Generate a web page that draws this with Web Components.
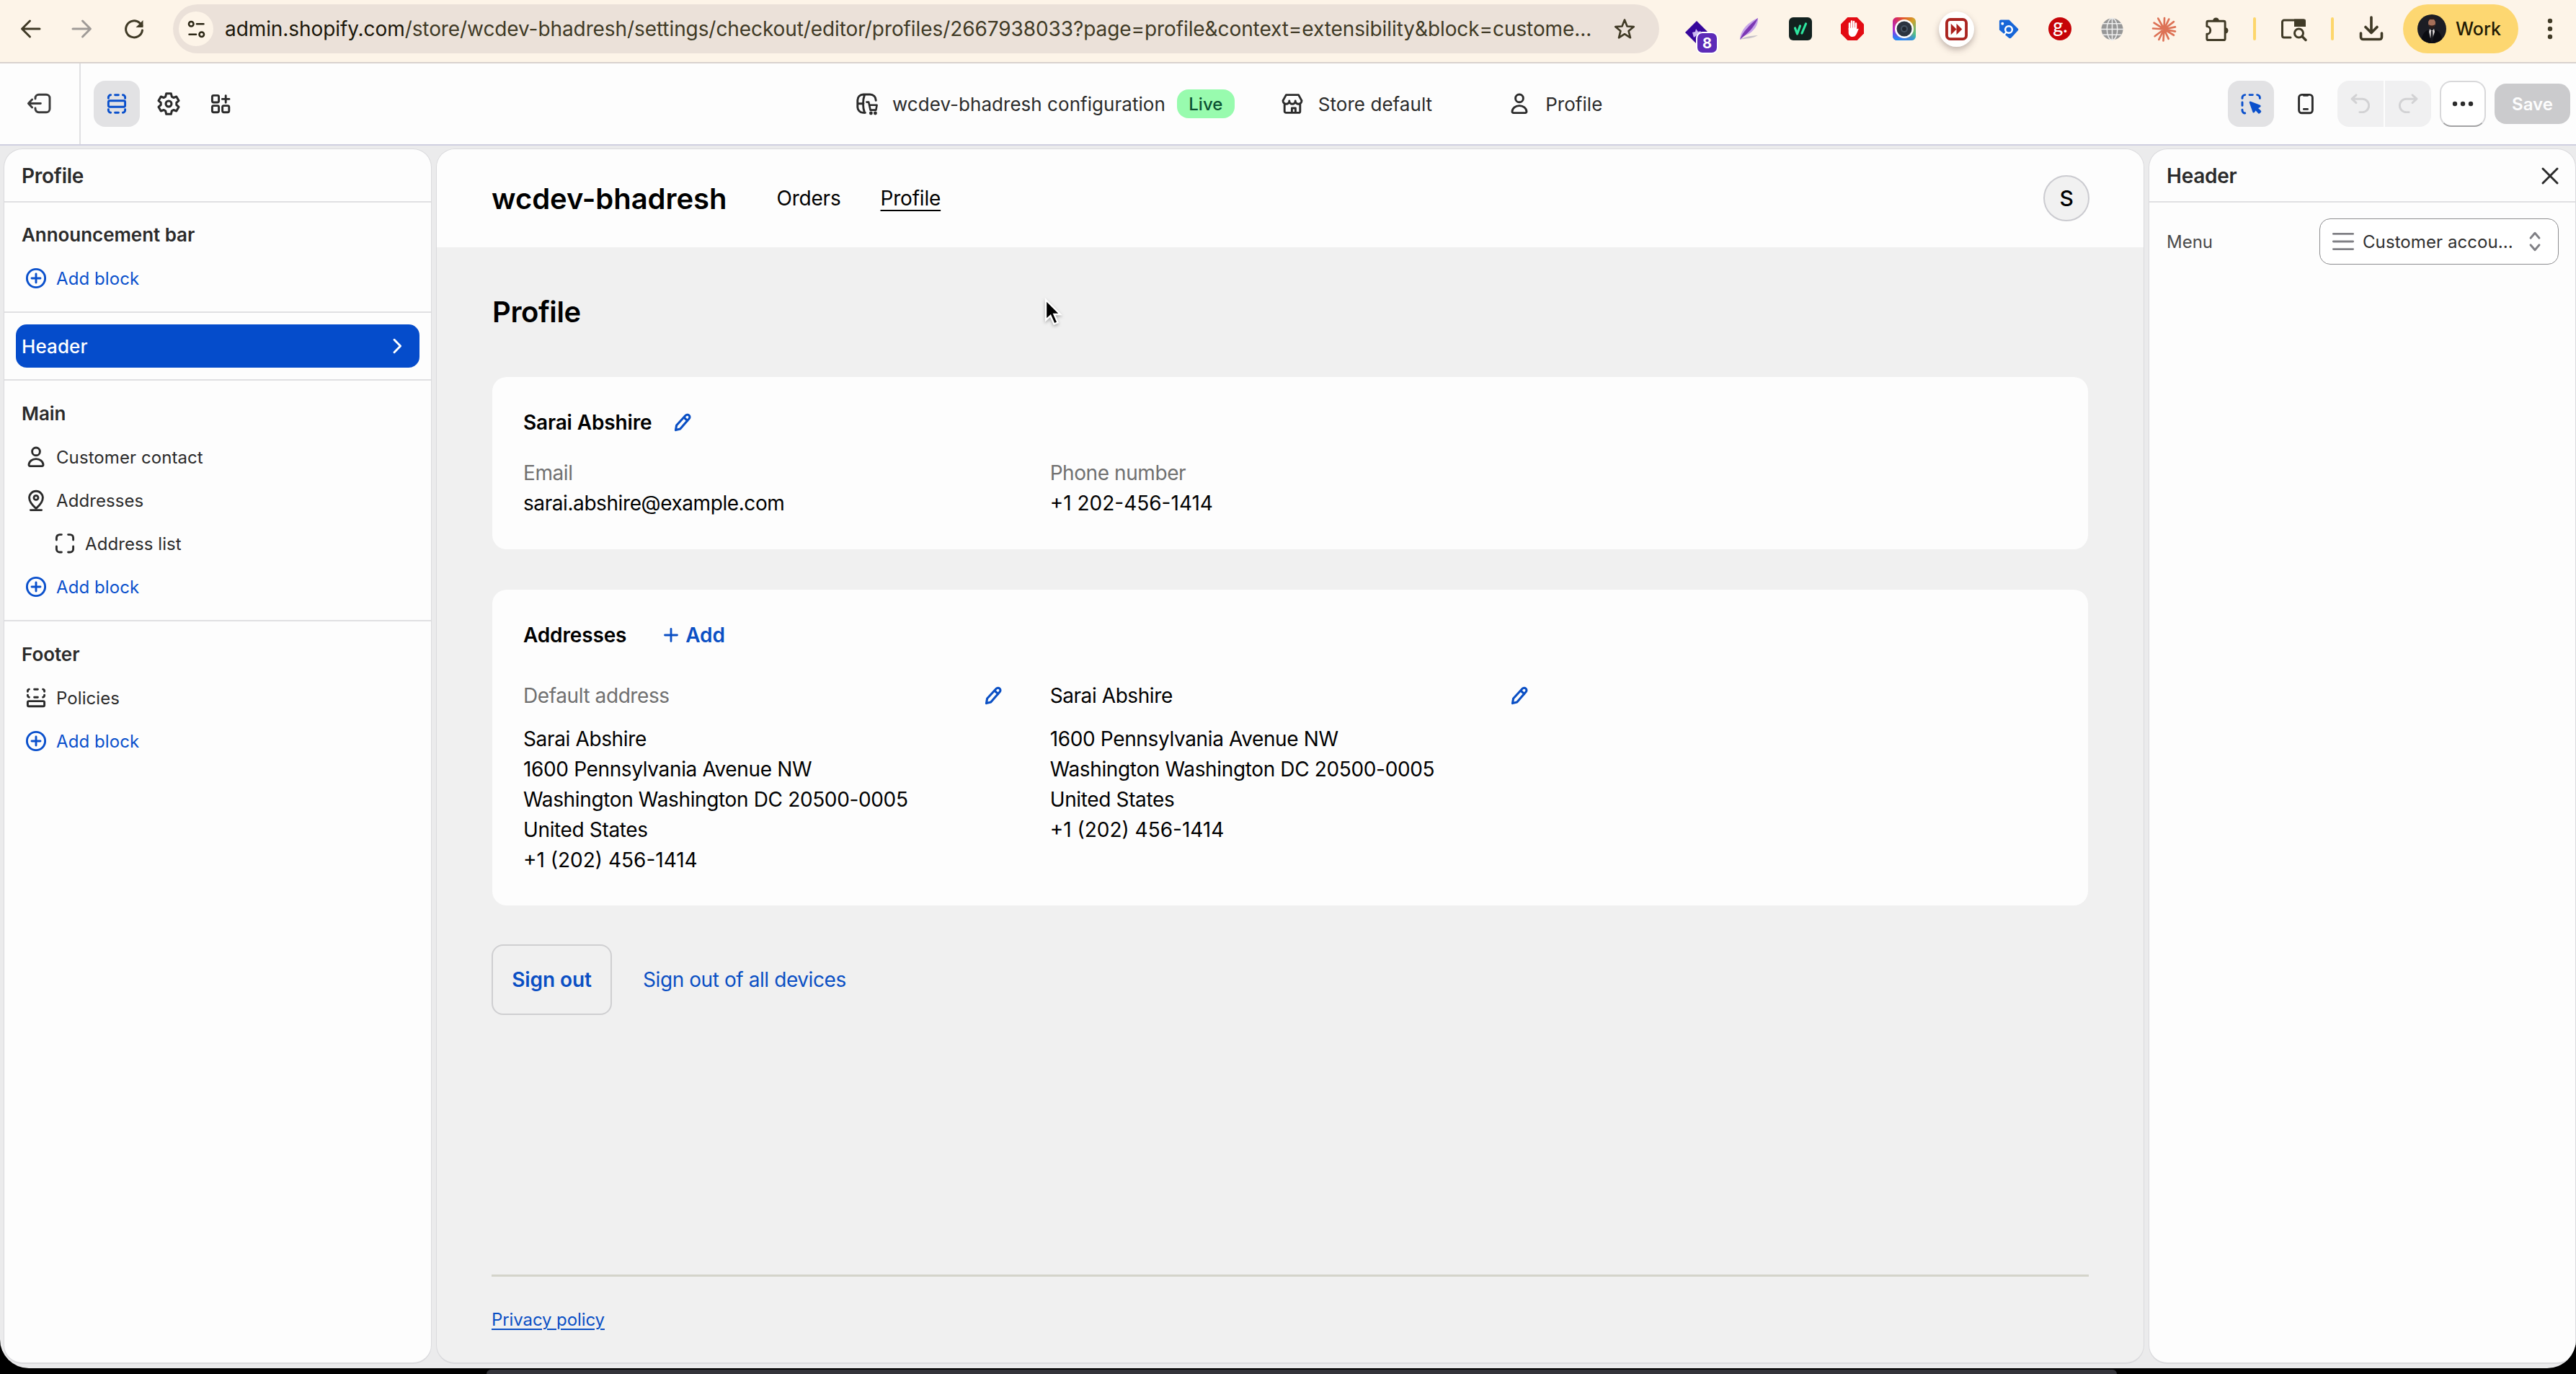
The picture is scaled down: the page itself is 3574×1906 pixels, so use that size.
<!DOCTYPE html>
<html lang="en">
<head>
<meta charset="utf-8">
<title>Profile - Checkout editor</title>
<style>
    html,
    body {
        margin: 0;
        height: 100%;
    }

    body {
        --editor-bg: #ebebec;
        --editor-surface: #fdfdfd;
        --editor-line: #e0e0e2;
        --editor-text: #2b2b2b;
        --editor-blue: #0a50cc;
        --preview-blue: #0a4fc4;
        width: 3574px;
        height: 1906px;
        overflow: hidden;
        background: #000;
        color: var(--editor-text);
        font-family: Inter, "Liberation Sans", sans-serif;
        font-size: 26px;
    }
</style>
</head>
<body>

<!-- Icon: <ce-icon name size> -->
<script>
    const ICONS = {
        /* browser chrome */
        'back': ['0 0 32 32', '<path d="M29 16H5M15.500 5 4.500 16l11 11" stroke="#403a26" stroke-width="3"/>'],
        'forward': ['0 0 32 32', '<path d="M3 16h24M16.500 5l11 11-11 11" stroke="#a09b97" stroke-width="3"/>'],
        'reload': ['0 0 32 32', '<path d="M27.500 18A11.500 11.500 0 1 1 24 8l3 3.500" stroke="#403a26" stroke-width="3"/><path d="M28.500 4v10h-10z" fill="#403a26"/>'],
        'site-info': ['0 0 32 32', '<g stroke="#2c2715" stroke-width="2.800"><circle cx="8" cy="8" r="3.600"/><path d="M16.500 8H27M5 24h10.500"/><circle cx="24" cy="24" r="3.600"/></g>'],
        'star': ['0 0 32 32', '<path d="m16 3.500 3.500 9 9.300.6-7.200 6 2.400 9.200-8-5.100-8 5.100 2.400-9.200-7.200-6 9.300-.6z" stroke="#403a26" stroke-width="2.600"/>'],
        'ext-diamond': ['0 0 60 60', '<path d="M25 14 41 30 25 46 9 30z" fill="#37079b"/><path d="m19 30 4-1 1-4 3 4 4-1-2 4 1 3-5-1-4 3z" fill="#cbb9f2"/><rect x="24" y="29" width="31" height="31" rx="9" fill="#fff"/><rect x="26" y="31" width="27" height="27" rx="7" fill="#5d2bb8"/><text x="39.500" y="52" font-size="20" font-weight="700" text-anchor="middle" fill="#fff">8</text>'],
        'ext-feather': ['0 0 32 32', '<path d="M4 31C5 16 17 6 29 1c1 9-5 19-17 24-3 1-5 3-8 6z" fill="#c7a6e8"/><path d="M4 31C8 20 17 11 29 1 24 14 16 21 4 31z" fill="#7c38b4"/><path d="M4 31c8-5 15-5 25-6-8 5-16 4-25 6z" fill="#c8c3c8"/>'],
        'ext-check': ['0 0 32 32', '<rect width="32" height="32" rx="6" fill="#12211f"/><path d="m8.500 15 3 8 4-11" stroke="#2ee6a0" stroke-width="3.200"/><path d="m18 22 5.500-13" stroke="#2ee6a0" stroke-width="3.200"/>'],
        'ext-stop': ['0 0 32 32', '<path d="M9.400 0h13.200L32 9.400v13.200L22.600 32H9.400L0 22.600V9.400z" fill="#e30b13"/><path d="M12 17V8.500M15 16V5.500M18 16V6M21 17V8.500" stroke="#fff" stroke-width="2.500"/><path d="M10.700 15v6c0 4 2.500 6 5.500 6 4 0 5.500-3 8.500-11-1.500-.8-2.500 0-3.700 2.500V14z" fill="#fff"/>'],
        'ext-lens': ['0 0 32 32', '<defs><linearGradient id="a" x1="0" y1="0" x2="1" y2="1"><stop offset="0" stop-color="#f0142a"/><stop offset=".5" stop-color="#d4a028"/><stop offset="1" stop-color="#10cfb4"/></linearGradient><linearGradient id="b" x1=".9" y1="0" x2="0" y2=".7"><stop offset=".35" stop-color="#a020e0" stop-opacity="0"/><stop offset="1" stop-color="#b010f0"/></linearGradient><linearGradient id="c" x1=".4" y1=".6" x2=".3" y2="1"><stop offset="0" stop-color="#189cf0" stop-opacity="0"/><stop offset="1" stop-color="#1890f5"/></linearGradient></defs><rect width="32" height="32" rx="6" fill="url(#a)"/><rect width="32" height="32" rx="6" fill="url(#b)"/><rect width="32" height="32" rx="6" fill="url(#c)"/><circle cx="16" cy="16" r="13" fill="#fff"/><circle cx="16" cy="16" r="10.500" fill="#2c3440"/><circle cx="16" cy="16" r="5" fill="#465362"/><circle cx="16" cy="16" r="3" fill="#20262e"/>'],
        'ext-skip': ['0 0 32 32', '<rect x="2" y="2" width="28" height="28" rx="5" fill="#fff" stroke="#aa2420" stroke-width="4"/><path d="M8 8l8 8-8 8zM16 8l8 8-8 8z" fill="#ad211d"/>'],
        'ext-tag': ['0 0 32 32', '<path d="M3 4.500a2 2 0 0 1 2-2h12L29.500 15c1 1 1 2 0 3L20 28.500c-1 1-2.500 1-3.500 0L3 17z" fill="#1766d8"/><circle cx="7.500" cy="8" r="2" fill="#fff"/><circle cx="16.500" cy="16.500" r="5" stroke="#fff" stroke-width="2.600"/><path d="M13 20 10 24" stroke="#fff" stroke-width="2.400"/>'],
        'ext-g': ['0 0 32 32', '<circle cx="16" cy="16" r="16" fill="#c60408"/><text x="16.500" y="21" font-size="27" font-weight="500" text-anchor="middle" fill="#fff" font-family="Lato, sans-serif">g.</text>'],
        'ext-globe': ['0 0 32 32', '<circle cx="16" cy="16" r="15.500" fill="#979797"/><g stroke="#efefef" stroke-width="1.500"><ellipse cx="16" cy="16" rx="7.500" ry="15.500"/><path d="M16 0v32M0 16h32M3 8h26M3 24h26"/></g>'],
        'ext-burst': ['0 0 32 32', '<path d="M16 16 16.500 1M16 16l6.500-13.500M16 16 29 6M16 16l15-3M16 16l15 3M16 16l13 8M16 16l6 13M16 16l-1 15.500M16 16 9 30M16 16 3.500 25.500M16 16l-15-1M16 16 2.500 7.500M16 16 8 1.500" stroke="#dd7256" stroke-width="2.600"/>'],
        'puzzle': ['0 0 36 36', '<path d="M5 14V8.500a2 2 0 0 1 2-2h22a2 2 0 0 1 2 2v23a2 2 0 0 1-2 2H7a2 2 0 0 1-2-2V25c3 0 5-2.500 5-5.500S8 14 5 14z" stroke="#403a26" stroke-width="3"/><path d="M13.500 6c0-6 9-6 9 0zM31 15.500c6 0 6 9 0 9z" fill="#403a26"/>'],
        'tab-search': ['0 0 36 36', '<path d="M14 30H5a2.500 2.500 0 0 1-2.500-2.500v-19A2.500 2.500 0 0 1 5 6h27" stroke="#403a26" stroke-width="3"/><path d="M19 4.500h14a2 2 0 0 1 2 2V15H19z" fill="#403a26"/><circle cx="25.500" cy="24" r="6" stroke="#403a26" stroke-width="3"/><path d="m30 28.500 5 5" stroke="#403a26" stroke-width="3.500"/>'],
        'download': ['0 0 36 36', '<path d="M18 2v21M10 15.500l8 8 8-8M3.500 24v5.500a3 3 0 0 0 3 3h23a3 3 0 0 0 3-3V24" stroke="#403a26" stroke-width="3.600"/>'],
        'kebab': ['0 0 36 36', '<g fill="#403a26"><circle cx="18" cy="7" r="3.200"/><circle cx="18" cy="18" r="3.200"/><circle cx="18" cy="29" r="3.200"/></g>'],
        'avatar': ['0 0 40 40', '<defs><clipPath id="r"><circle cx="20" cy="20" r="20"/></clipPath></defs><g clip-path="url(#r)"><path d="M0 0h40v40H0z" fill="#1c1d24"/><path d="M5 40c1-14 6-19 15-19s14 5 15 19z" fill="#0b0c12"/><path d="m17 20 3 3 3-3 1 4-3 9h-3l-2-9z" fill="#d9d5d5"/><path d="m19 23-1 12 2 4 2-4-1-12z" fill="#15161d"/><ellipse cx="20" cy="12" rx="5" ry="6.500" fill="#a56f59"/><path d="M15 9c0-7 10-7 10 0l-2-2h-6zM15.500 14c1 7 8 7 9 0-3 2-6 2-9 0z" fill="#2b1e1c"/></g>'],

        /* editor */
        'exit': ['0 0 20 20', '<path d="M7 6.500V6a2.400 2.400 0 0 1 2.400-2.400h5.200A2.400 2.400 0 0 1 17 6v7.500a2.400 2.400 0 0 1-2.400 2.400H9.400A2.400 2.400 0 0 1 7 13.500V13M10.700 9.750H2.300M4.800 7 2.200 9.750l2.600 2.750"/>'],
        'sections': ['0 0 20 20', '<path d="M4.200 6.200V5.500A1.600 1.600 0 0 1 5.800 3.900M8.800 3.900h2.400M14.200 3.900a1.600 1.600 0 0 1 1.600 1.600v.7M4.200 13.800v.7a1.600 1.600 0 0 0 1.600 1.600M8.800 16.100h2.400M14.200 16.100a1.600 1.600 0 0 0 1.600-1.600v-.7"/><rect x="4.200" y="7.900" width="11.600" height="4.200" rx="1"/>'],
        'gear': ['0 0 20 20', '<path d="M8.430 3.180h3.140l.5 2.100 1.130.65 1.920-.7 1.570 2.720-1.540 1.330v1.440l1.540 1.330-1.570 2.720-1.920-.7-1.130.65-.5 2.100H8.430l-.5-2.100-1.130-.65-1.920.7-1.570-2.720 1.540-1.330V9.280L3.310 7.950l1.570-2.720 1.920.7 1.130-.65z"/><circle cx="10" cy="10" r="1.900"/>'],
        'apps': ['0 0 20 20', '<rect x="4.200" y="4.200" width="4.600" height="4.800" rx="1"/><rect x="4.200" y="11.300" width="4.600" height="4.600" rx="1"/><rect x="11.300" y="11.300" width="4.600" height="4.600" rx="1"/><path d="M13.600 4.300v4.800M11.200 6.700H16"/>'],
        'market': ['0 0 20 20', '<path d="M8.700 16.200H7.200A4 4 0 0 1 3.400 12.300V7.500a4 4 0 0 1 4-4h4.700a4 4 0 0 1 4 4v.2M8.300 3.700c-1.400 3.600-1.400 8.900 0 12.500M3.500 9.900h4"/><path d="M9.700 8.800h1.400l1.200 5.500h3.900l.6-3.400h-5" stroke-width="1.300"/><circle cx="12.700" cy="16.500" r=".5" fill="currentColor"/><circle cx="15.700" cy="16.500" r=".5" fill="currentColor"/>'],
        'store': ['0 0 20 20', '<path d="M4.600 10v5.200a1 1 0 0 0 1 1h8.800a1 1 0 0 0 1-1V10M5.700 3.800h8.600l2.200 4c0 1.500-1 2.300-2.200 2.300S12.100 9.300 12.100 8c0 1.300-1 2.100-2.100 2.100S7.900 9.300 7.900 8c0 1.300-1 2.100-2.200 2.100S3.500 9.300 3.500 7.800zM9.700 16v-3h2.500v3"/>'],
        'person': ['0 0 20 20', '<circle cx="10" cy="6.200" r="2.700"/><path d="M5 15.300c.2-2.400 2.300-4 5-4s4.800 1.600 5 4c0 .6-.4 1-1 1H6c-.6 0-1-.4-1-1z"/>'],
        'pin': ['0 0 20 20', '<path d="M10 15.700C7.200 13.300 5.300 10.900 5.300 8.300a4.700 4.700 0 0 1 9.400 0c0 2.600-1.900 5-4.700 7.400z"/><circle cx="10" cy="8.200" r="1.500"/><path d="M6.200 16.800h7.600"/>'],
        'frame': ['0 0 20 20', '<path d="M4.200 7.500V6a2.200 2.200 0 0 1 2.200-2.200h1.300M12.300 3.800h1.300A2.200 2.200 0 0 1 15.800 6v1.500M15.800 12v1.800a2.200 2.200 0 0 1-2.200 2.200h-1.300M7.700 16H6.400a2.200 2.200 0 0 1-2.200-2.200V12"/>'],
        'footer': ['0 0 20 20', '<path d="M4.200 5.600v-.3a1.300 1.300 0 0 1 1-1.200M8.800 4.100h2.400M14.800 4.100a1.300 1.300 0 0 1 1 1.200v.3M4.200 8.100v.3a1.300 1.300 0 0 0 1 1.200M8.800 9.600h2.400M14.800 9.600a1.300 1.300 0 0 0 1-1.200v-.3"/><rect x="4.200" y="12.300" width="11.600" height="3.600" rx=".8"/>'],
        'add': ['0 0 20 20', '<circle cx="10" cy="10" r="6.300"/><path d="M10 7v6M7 10h6"/>'],
        'chevron': ['0 0 20 20', '<path d="m8 5.600 4.300 4.400L8 14.400"/>'],
        'select': ['0 0 20 20', '<path d="M4 6.200v-.5A1.900 1.900 0 0 1 5.900 3.800M9 3.800h2.200M14.300 3.800a1.900 1.900 0 0 1 1.900 1.900v.5M4 9v2.200M4 14.100v.5a1.900 1.900 0 0 0 1.900 1.900"/><path d="m9.600 9 2.300 6.500 1.300-2 2.400 2.600.8-.8-2.500-2.400 2.200-1.300z" fill="currentColor"/>'],
        'phone': ['0 0 20 20', '<rect x="5.300" y="3.700" width="9.400" height="12.700" rx="2"/><path d="M8.700 4.200h2.600M8.700 13.700h2.600"/>'],
        'undo': ['0 0 20 20', '<path d="M7 3.900 4 6.600 7 9.300M4.300 6.600h6.900a4.600 4.600 0 0 1 0 9.200H9.400"/>'],
        'redo': ['0 0 20 20', '<path d="m13 3.900 3 2.700-3 2.700M15.700 6.600H8.800a4.600 4.600 0 0 0 0 9.200h1.800"/>'],
        'more': ['0 0 20 20', '<g fill="currentColor" stroke="none"><circle cx="4.500" cy="10" r="1.600"/><circle cx="10" cy="10" r="1.600"/><circle cx="15.500" cy="10" r="1.600"/></g>'],
        'close': ['0 0 20 20', '<path d="m5 5 10 10M15 5 5 15"/>'],
        'menu': ['0 0 20 20', '<path d="M3.200 4.700h13.600M3.200 10h13.600M3.200 15.300h13.600"/>'],
        'updown': ['0 0 20 20', '<path d="m7 7.600 3-3.500 3 3.500M7 12.400l3 3.500 3-3.500"/>'],
        'pencil': ['0 0 28 28', '<path d="M18.200 4.300a3.300 3.300 0 0 1 4.900 4.500L10.700 23l-6.200 1.600L5.600 18zM15.900 7l4.900 4.600" stroke-width="3.100"/>'],
        'plus': ['0 0 28 28', '<path d="M14 5.500v17M5.500 14h17" stroke-width="2.800"/>'],
        'cursor': ['0 0 32 44', '<path d="M4 3v28l6.500-6 5 11.500 5-2.200-5-11.300h8.500z" fill="#000" stroke="#fff" stroke-width="2.400" stroke-linejoin="miter"/>']
    };

    class CeIcon extends HTMLElement {
        connectedCallback() {
            const [box, shapes] = ICONS[this.getAttribute('name')];
            const size = this.getAttribute('size') || 40;
            const root = this.attachShadow({mode: 'open'});
            root.innerHTML = `
                <style>
                    :host { display: block; flex: none; width: ${size}px; height: ${size}px; }
                    svg { display: block; width: 100%; height: 100%; overflow: visible; }
                </style>
                <svg viewBox="${box}" fill="none" stroke-width="1.45" stroke-linecap="round" stroke-linejoin="round">${shapes}</svg>`;
            // stroked editor icons take the text colour, filled ones opt out
            if (!/fill="#|stroke="#|url\(/.test(shapes)) {
                root.querySelector('svg').setAttribute('stroke', 'currentColor');
            }
        }
    }
    window.customElements.define('ce-icon', CeIcon);
</script>

<!-- Browser bar -->
<template id="browser-bar-template">
    <style>
        :host {
            display: flex;
            align-items: center;
            box-sizing: border-box;
            height: 88px;
            padding: 0 0 6px 26px;
            background: #fdf4e8;
            border-bottom: 2px solid #d9d2cf;
        }

        .nav {
            display: flex;
            gap: 40px;
        }

        .url {
            display: flex;
            align-items: center;
            box-sizing: border-box;
            width: 2062px;
            height: 68px;
            margin-left: 38px;
            padding: 0 32px 0 8px;
            border-radius: 34px;
            background: #ebe1d9;
            color: #403a26;
            font-size: 28px;
            letter-spacing: -0.085px;
            white-space: nowrap;
        }

        .url b {
            font-weight: 400;
            color: #1b170a;
        }

        .url > ce-icon {
            margin-left: auto;
        }

        .info {
            display: grid;
            place-items: center;
            width: 48px;
            height: 48px;
            margin-right: 16px;
            border-radius: 50%;
            background: #fdf4e8;
        }

        .extensions {
            display: grid;
            grid-template-columns: repeat(11, 72px);
            place-items: center;
            margin-left: 16px;
        }

        .ringed {
            display: grid;
            place-items: center;
            width: 49px;
            height: 49px;
            border-radius: 50%;
            background: #fff;
            box-shadow: 0 4px 8px rgba(80, 60, 60, 0.35);
        }

        .sep {
            width: 4px;
            height: 32px;
            border-radius: 2px;
            background: #fdd66b;
        }

        .profile {
            display: flex;
            align-items: center;
            gap: 13px;
            box-sizing: border-box;
            width: 160px;
            height: 68px;
            margin: 0 26px;
            padding-left: 20px;
            border-radius: 34px;
            background: #fdd771;
            color: #221b05;
            font-size: 25px;
            font-weight: 500;
        }
    </style>
    <div class="nav">
        <ce-icon name="back" size="32"></ce-icon>
        <ce-icon name="forward" size="32"></ce-icon>
        <ce-icon name="reload" size="32"></ce-icon>
    </div>
    <div class="url">
        <div class="info"><ce-icon name="site-info" size="29"></ce-icon></div>
        <span><b>admin.shopify.com</b>/store/wcdev-bhadresh/settings/checkout/editor/profiles/2667938033?page=profile&amp;context=extensibility&amp;block=custome...</span>
        <ce-icon name="star" size="32"></ce-icon>
    </div>
    <div class="extensions">
        <ce-icon name="ext-diamond" size="60" style="margin: 10px 0 0 10px"></ce-icon>
        <ce-icon name="ext-feather" size="32"></ce-icon>
        <ce-icon name="ext-check" size="32"></ce-icon>
        <ce-icon name="ext-stop" size="32"></ce-icon>
        <ce-icon name="ext-lens" size="32"></ce-icon>
        <div class="ringed"><ce-icon name="ext-skip" size="31"></ce-icon></div>
        <ce-icon name="ext-tag" size="31"></ce-icon>
        <ce-icon name="ext-g" size="32"></ce-icon>
        <ce-icon name="ext-globe" size="31"></ce-icon>
        <ce-icon name="ext-burst" size="33"></ce-icon>
        <ce-icon name="puzzle" size="35"></ce-icon>
    </div>
    <div class="sep" style="margin: 0 34px 0 16px"></div>
    <ce-icon name="tab-search" size="36"></ce-icon>
    <div class="sep" style="margin: 0 34px"></div>
    <ce-icon name="download" size="36"></ce-icon>
    <div class="profile"><ce-icon name="avatar" size="40"></ce-icon>Work</div>
    <ce-icon name="kebab" size="36"></ce-icon>
</template>

<!-- Editor toolbar -->
<template id="editor-toolbar-template">
    <style>
        :host {
            display: flex;
            align-items: center;
            box-sizing: border-box;
            height: 114px;
            padding-right: 8px;
            background: var(--editor-surface);
            border-bottom: 2px solid #cfcfe0;
        }

        .exit {
            display: grid;
            place-items: center;
            box-sizing: border-box;
            align-self: stretch;
            width: 112px;
            border-right: 2px solid var(--editor-line);
            color: #3a3a3a;
        }

        .tools {
            display: flex;
            gap: 8px;
            margin-left: 18px;
        }

        .btn {
            display: grid;
            place-items: center;
            box-sizing: border-box;
            width: 64px;
            height: 64px;
            border-radius: 16px;
        }

        .active {
            background: #e2e2e4;
            color: var(--editor-blue);
        }

        .context {
            display: flex;
            align-items: center;
            margin-left: 845px;
            letter-spacing: 0.04px;
        }

        .label {
            margin-left: 15px;
        }

        .badge {
            display: grid;
            place-items: center;
            width: 80px;
            height: 40px;
            margin: 0 60px 0 16px;
            border-radius: 16px;
            background: #98fbae;
            color: #0c5132;
            font-size: 24px;
            font-weight: 500;
        }

        .actions {
            display: flex;
            align-items: center;
            gap: 12px;
            margin-left: auto;
        }

        .history {
            display: flex;
            gap: 2px;
            color: #d2d2d4;
        }

        .history .btn {
            background: #f0f0f1;
        }

        .history .btn:first-child {
            border-radius: 16px 0 0 16px;
        }

        .history .btn:last-child {
            border-radius: 0 16px 16px 0;
        }

        .outlined {
            border: 2px solid #d8d8da;
            border-bottom-color: #a2a2a4;
            background: #fff;
        }

        .save {
            display: grid;
            place-items: center;
            width: 105px;
            height: 56px;
            border-radius: 16px;
            background: #cbcbcd;
            color: #fdfdfd;
            font-size: 24px;
            font-weight: 600;
        }
    </style>
    <div class="exit"><ce-icon name="exit"></ce-icon></div>
    <div class="tools">
        <div class="btn active"><ce-icon name="sections"></ce-icon></div>
        <div class="btn"><ce-icon name="gear" size="42"></ce-icon></div>
        <div class="btn"><ce-icon name="apps"></ce-icon></div>
    </div>
    <div class="context">
        <ce-icon name="market"></ce-icon>
        <span class="label">wcdev-bhadresh configuration</span>
        <span class="badge">Live</span>
        <ce-icon name="store"></ce-icon>
        <span class="label" style="margin-left: 16px">Store default</span>
        <ce-icon name="person" style="margin-left: 101px"></ce-icon>
        <span class="label" style="margin-left: 16px">Profile</span>
    </div>
    <div class="actions">
        <div class="btn active"><ce-icon name="select"></ce-icon></div>
        <div class="btn"><ce-icon name="phone"></ce-icon></div>
        <div class="history">
            <div class="btn"><ce-icon name="undo"></ce-icon></div>
            <div class="btn"><ce-icon name="redo"></ce-icon></div>
        </div>
        <div class="btn outlined"><ce-icon name="more"></ce-icon></div>
        <div class="save">Save</div>
    </div>
</template>

<!-- Side panel: titled card with slotted content -->
<template id="side-panel-template">
    <style>
        :host {
            display: block;
            box-sizing: border-box;
            overflow: hidden;
            border: 2px solid #dadadd;
            border-width: 1px 1px 2px;
            border-radius: 26px;
            background: var(--editor-surface);
        }

        header {
            display: flex;
            align-items: center;
            justify-content: space-between;
            box-sizing: border-box;
            height: 72px;
            padding: 2px 15px 0 24px;
            font-size: 28px;
            font-weight: 600;
            letter-spacing: -0.25px;
        }
    </style>
    <header><span id="title"></span><slot name="action"></slot></header>
    <slot></slot>
</template>

<!-- Group of blocks in the left panel -->
<template id="block-group-template">
    <style>
        :host {
            display: block;
            padding: 16px 0;
            border-top: 2px solid var(--editor-line);
        }

        h2 {
            margin: 0;
            padding-left: 24px;
            font-size: 26px;
            font-weight: 600;
            line-height: 60px;
            letter-spacing: -0.05px;
        }
    </style>
    <h2></h2>
    <slot></slot>
</template>

<!-- Block row -->
<template id="block-row-template">
    <style>
        :host {
            display: flex;
            align-items: center;
            gap: 8px;
            height: 60px;
            padding-left: 24px;
            font-size: 24px;
            letter-spacing: 0.08px;
        }

        :host([nested]) {
            padding-left: 64px;
        }

        :host([add]) {
            color: var(--editor-blue);
        }

        :host([selected]) {
            justify-content: space-between;
            margin: 0 16px;
            padding: 0 11px 0 8px;
            border-radius: 15px;
            background: #054ccb;
            color: #fff;
            font-size: 26px;
            font-weight: 500;
        }
    </style>
    <slot></slot>
</template>

<!-- Customer account preview -->
<template id="account-preview-template">
    <style>
        :host {
            display: flex;
            flex-direction: column;
            box-sizing: border-box;
            overflow: hidden;
            border: 2px solid #dadadd;
            border-width: 1px 1px 2px;
            border-radius: 26px;
            background: #f0f0f0;
            color: #000;
            font-size: 28px;
            letter-spacing: -0.42px;
        }

        header {
            display: flex;
            align-items: center;
            height: 136px;
            padding: 0 75px 0 76px;
            background: var(--editor-surface);
        }

        .shop {
            margin-right: 69px;
            font-size: 40px;
            font-weight: 600;
            letter-spacing: -0.05px;
        }

        nav {
            display: flex;
            gap: 55px;
            letter-spacing: -0.2px;
        }

        .current {
            text-decoration: underline;
            text-decoration-thickness: 2px;
            text-underline-offset: 6px;
        }

        .initial {
            display: grid;
            place-items: center;
            box-sizing: border-box;
            width: 64px;
            height: 64px;
            margin-left: auto;
            border: 2px solid #cbcbd0;
            border-radius: 50%;
            background: #f1f1f1;
            font-size: 30px;
            font-weight: 500;
        }

        main {
            display: flex;
            flex-direction: column;
            gap: 56px;
            flex: 1;
            padding: 66px 77px 0;
        }

        h1 {
            margin: 0 0 10px;
            font-size: 40px;
            font-weight: 600;
            line-height: 48px;
            letter-spacing: -0.4px;
        }

        .signout {
            display: flex;
            align-items: center;
            gap: 43px;
            margin: -2px 0 0 -1px;
            color: var(--preview-blue);
        }

        .signout b {
            box-sizing: border-box;
            width: 167px;
            border: 2px solid #cfcfd1;
            border-radius: 16px;
            font-weight: 600;
            line-height: 94px;
            text-align: center;
            letter-spacing: -0.1px;
        }

        footer {
            height: 119px;
            margin: 0 76px 0 76px;
            border-top: 3px solid #d4d4ca;
            color: var(--preview-blue);
            font-size: 24px;
            line-height: 120px;
            letter-spacing: -0.1px;
            text-decoration: underline;
            text-decoration-thickness: 2px;
            text-underline-offset: 4px;
        }

        /* pointer floats over the page */
        .pointer {
            position: absolute;
            left: 1441px;
            top: 413px;
            filter: drop-shadow(0 2px 2px rgba(0, 0, 0, 0.3));
        }
    </style>
    <header>
        <span class="shop">wcdev-bhadresh</span>
        <nav><span>Orders</span><span class="current">Profile</span></nav>
        <span class="initial">S</span>
    </header>
    <main>
        <h1>Profile</h1>
        <slot></slot>
        <div class="signout"><b>Sign out</b><span>Sign out of all devices</span></div>
    </main>
    <footer>Privacy policy</footer>
    <ce-icon class="pointer" name="cursor" size="44"></ce-icon>
</template>

<!-- White card with a heading and three columns -->
<template id="info-card-template">
    <style>
        :host {
            display: block;
            box-sizing: border-box;
            padding: 42px 44px 42px 43px;
            border-radius: 20px;
            background: var(--editor-surface);
        }

        .heading {
            display: flex;
            align-items: center;
            height: 42px;
            font-weight: 600;
            letter-spacing: -0.15px;
        }

        .action {
            display: flex;
            align-items: center;
            color: var(--preview-blue);
        }

        .columns {
            display: grid;
            grid-template-columns: repeat(3, 1fr);
            gap: 65px;
        }
    </style>
    <div class="heading"><span id="title"></span><div class="action"><slot name="action"></slot></div></div>
    <div class="columns"><slot></slot></div>
</template>

<!-- Address / contact entry -->
<template id="info-entry-template">
    <style>
        :host {
            display: block;
            line-height: 42px;
        }

        .label {
            display: flex;
            align-items: center;
            justify-content: space-between;
            color: #707070;
        }

        :host([editable]) .label {
            margin-bottom: 18px;
        }

        :host([named]) .label {
            color: #000;
        }

        ce-icon {
            color: var(--preview-blue);
        }

        .value {
            white-space: pre-line;
        }

        :host([editable]) .value {
            letter-spacing: -0.36px;
        }

        ::slotted(.phone) {
            letter-spacing: 0;
        }
    </style>
    <div class="label"><span id="label"></span></div>
    <div class="value"><slot></slot></div>
</template>

<!-- Menu setting in the right panel -->
<template id="menu-setting-template">
    <style>
        :host {
            display: flex;
            align-items: center;
            justify-content: space-between;
            height: 64px;
            padding: 22px 23px 0 24px;
            border-top: 2px solid var(--editor-line);
            color: #4a4a4a;
            font-size: 24px;
        }

        .select {
            display: flex;
            align-items: center;
            box-sizing: border-box;
            width: 332px;
            height: 64px;
            padding: 0 12px 0 12px;
            border: 1.5px solid #8d8d8f;
            border-radius: 15px;
            background: #fff;
            color: #2f2f2f;
            letter-spacing: 0.08px;
        }

        .select ce-icon {
            color: #808085;
        }

        .select ce-icon:last-child {
            margin-left: auto;
        }

        .select span {
            margin-left: 7px;
        }
    </style>
    <slot></slot>
    <div class="select"><ce-icon name="menu"></ce-icon><span>Customer accou...</span><ce-icon name="updown"></ce-icon></div>
</template>

<style>
    .app {
        display: flex;
        flex-direction: column;
        height: 1898px;
        overflow: hidden;
        border-radius: 0 0 40px 40px;
        background: var(--editor-bg);
    }

    .workspace {
        display: grid;
        grid-template-columns: 594px 1fr 593px;
        gap: 6px;
        flex: 1;
        padding: 4px 0 6px 5px;
    }

    .desktop-edge {
        width: 2262px;
        height: 6px;
        margin: 2px auto 0 675px;
        border-radius: 24px 24px 0 0;
        background: #34343a;
    }
</style>

<div class="app">
    <browser-bar></browser-bar>
    <editor-toolbar></editor-toolbar>
    <div class="workspace">
        <side-panel label="Profile">
            <block-group label="Announcement bar" style="padding-top: 15px">
                <block-row add><ce-icon name="add"></ce-icon>Add block</block-row>
            </block-group>
            <block-group>
                <block-row selected>Header<ce-icon name="chevron"></ce-icon></block-row>
            </block-group>
            <block-group label="Main">
                <block-row><ce-icon name="person"></ce-icon>Customer contact</block-row>
                <block-row><ce-icon name="pin"></ce-icon>Addresses</block-row>
                <block-row nested><ce-icon name="frame"></ce-icon>Address list</block-row>
                <block-row add><ce-icon name="add"></ce-icon>Add block</block-row>
            </block-group>
            <block-group label="Footer">
                <block-row><ce-icon name="footer"></ce-icon>Policies</block-row>
                <block-row add><ce-icon name="add"></ce-icon>Add block</block-row>
            </block-group>
        </side-panel>

        <account-preview>
            <info-card label="Sarai Abshire" style="height: 239px">
                <ce-icon slot="action" name="pencil" size="28" style="margin-left: 29px"></ce-icon>
                <info-entry label="Email" style="margin-top: 28px">sarai.abshire@example.com</info-entry>
                <info-entry label="Phone number" style="margin-top: 28px"><span class="phone">+1 202-456-1414</span></info-entry>
            </info-card>
            <info-card label="Addresses" style="height: 438px">
                <ce-icon slot="action" name="plus" size="28" style="margin: 0 6px 0 48px"></ce-icon>
                <span slot="action">Add</span>
                <info-entry label="Default address" editable style="margin-top: 42px">Sarai Abshire
1600 Pennsylvania Avenue NW
Washington Washington DC 20500-0005
United States
<span class="phone">+1 (202) 456-1414</span></info-entry>
                <info-entry label="Sarai Abshire" editable named style="margin-top: 42px">1600 Pennsylvania Avenue NW
Washington Washington DC 20500-0005
United States
<span class="phone">+1 (202) 456-1414</span></info-entry>
            </info-card>
        </account-preview>

        <side-panel label="Header">
            <ce-icon slot="action" name="close"></ce-icon>
            <menu-setting>Menu</menu-setting>
        </side-panel>
    </div>
</div>
<div class="desktop-edge"></div>

<script>
    // Base class: clones the template named after the element
    class EditorElement extends HTMLElement {
        constructor() {
            super();
            this.attachShadow({mode: 'open'});
            const template = document.getElementById(this.localName + '-template');
            this.shadowRoot.appendChild(template.content.cloneNode(true));
        }
    }

    class BrowserBar extends EditorElement {}
    class EditorToolbar extends EditorElement {}
    class BlockRow extends EditorElement {}
    class AccountPreview extends EditorElement {}
    class MenuSetting extends EditorElement {}

    class SidePanel extends EditorElement {
        connectedCallback() {
            this.shadowRoot.getElementById('title').textContent = this.getAttribute('label');
        }
    }

    class InfoCard extends EditorElement {
        connectedCallback() {
            this.shadowRoot.getElementById('title').textContent = this.getAttribute('label');
        }
    }

    class BlockGroup extends EditorElement {
        connectedCallback() {
            const heading = this.shadowRoot.querySelector('h2');
            if (this.hasAttribute('label')) {
                heading.textContent = this.getAttribute('label');
            } else {
                heading.remove();
            }
        }
    }

    class InfoEntry extends EditorElement {
        connectedCallback() {
            this.shadowRoot.getElementById('label').textContent = this.getAttribute('label');
            if (this.hasAttribute('editable')) {
                const pencil = document.createElement('ce-icon');
                pencil.setAttribute('name', 'pencil');
                pencil.setAttribute('size', '28');
                this.shadowRoot.querySelector('.label').appendChild(pencil);
            }
        }
    }

    window.customElements.define('browser-bar', BrowserBar);
    window.customElements.define('editor-toolbar', EditorToolbar);
    window.customElements.define('side-panel', SidePanel);
    window.customElements.define('block-group', BlockGroup);
    window.customElements.define('block-row', BlockRow);
    window.customElements.define('account-preview', AccountPreview);
    window.customElements.define('info-card', InfoCard);
    window.customElements.define('info-entry', InfoEntry);
    window.customElements.define('menu-setting', MenuSetting);
</script>
</body>
</html>
